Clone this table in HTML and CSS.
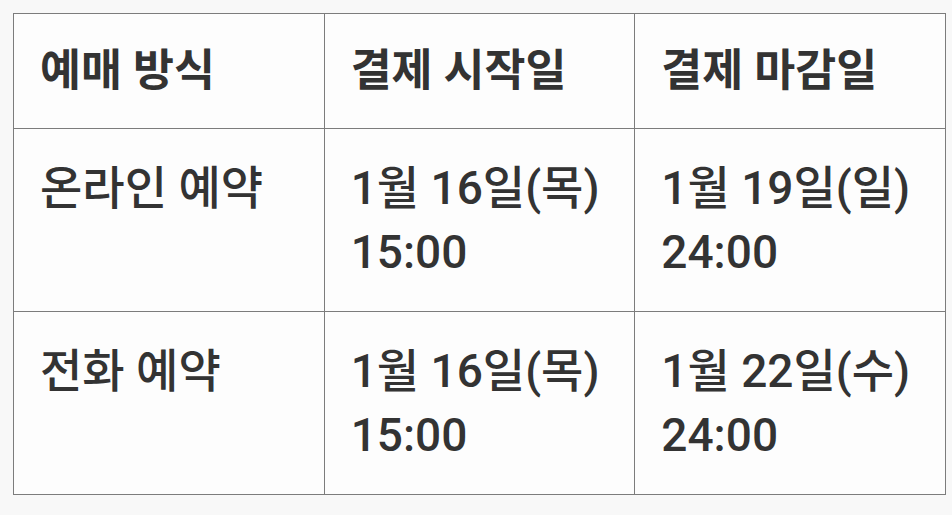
FILE: index.html
```html
<!DOCTYPE html>
<html lang="ko">
<head>
<meta charset="utf-8">
<link rel="stylesheet" href="styles.css">
</head>
<body>
<table class="schedule">
  <tr class="head">
    <th>예매 방식</th>
    <th>결제 시작일</th>
    <th>결제 마감일</th>
  </tr>
  <tr>
    <td>온라인 예약</td>
    <td>1월 16일(목)<br>15:00</td>
    <td>1월 19일(일)<br>24:00</td>
  </tr>
  <tr>
    <td>전화 예약</td>
    <td>1월 16일(목)<br>15:00</td>
    <td>1월 22일(수)<br>24:00</td>
  </tr>
</table>
</body>
</html>
```

FILE: styles.css
```css
html, body {
  margin: 0;
  padding: 0;
  background: #f8f8f8;
}
body {
  padding: 13px 7px 0 13px;
  font-family: Roboto, "Noto Sans CJK KR", sans-serif;
  color: #333333;
}
.schedule {
  border-collapse: collapse;
  width: 933px;
  table-layout: fixed;
  background: #fdfdfd;
}
.schedule th,
.schedule td {
  border: 1px solid #7c7c7c;
  text-align: left;
  vertical-align: top;
  padding: 27px 26px 27px;
  font-size: 46px;
  line-height: 64px;
}
.schedule th {
  font-weight: 700;
  font-size: 44.5px;
  padding-top: 25px;
  padding-bottom: 25px;
}
.schedule td {
  font-weight: 500;
}
```
